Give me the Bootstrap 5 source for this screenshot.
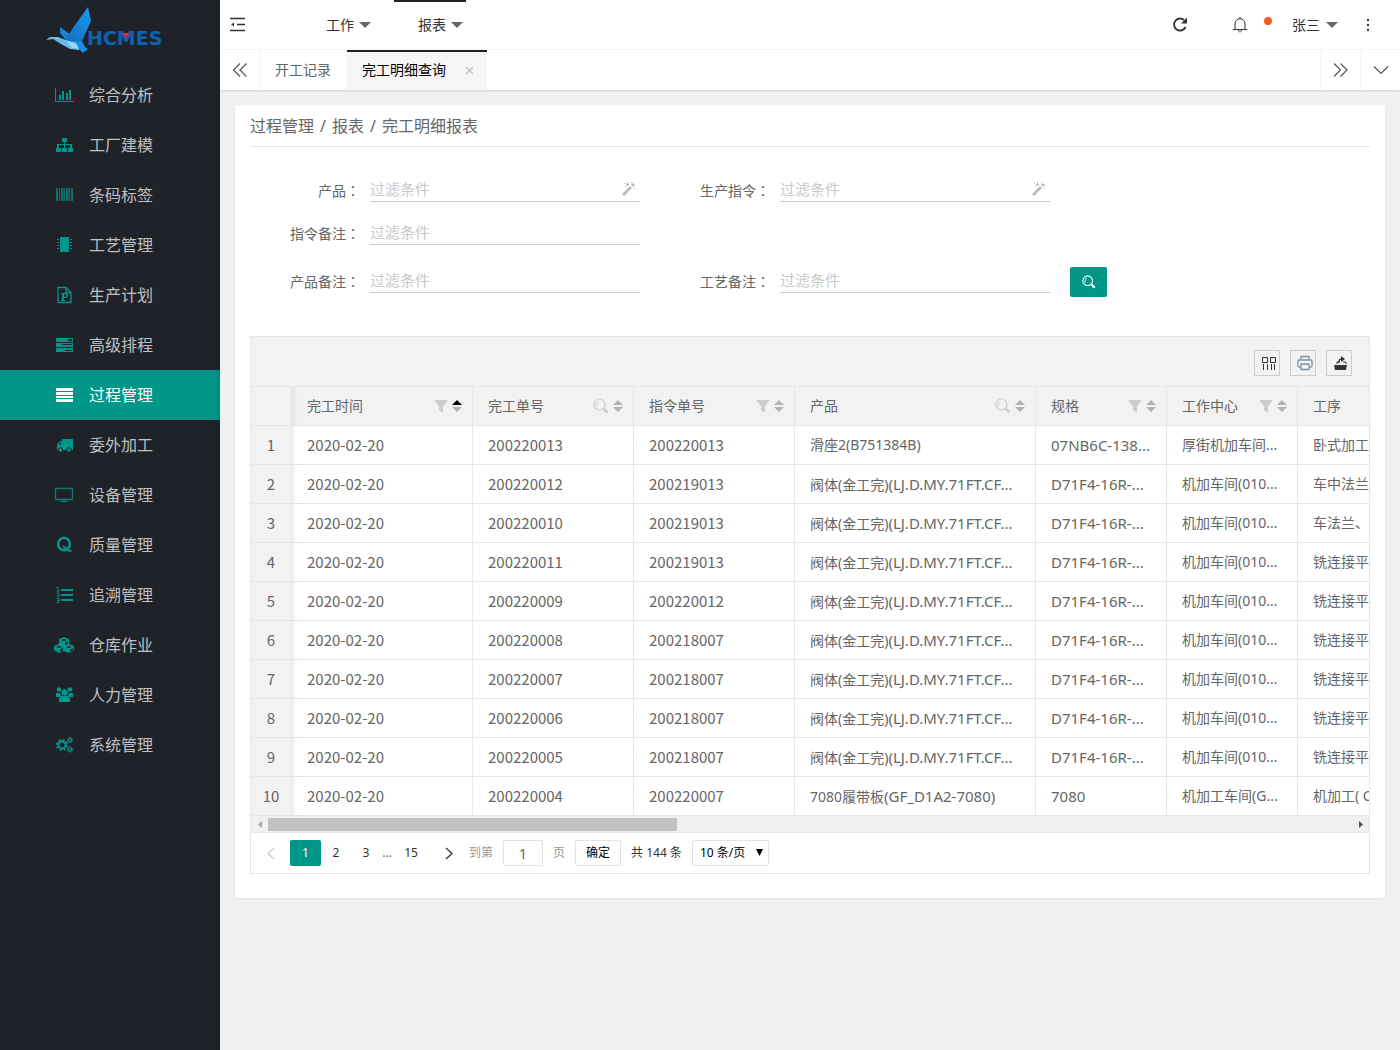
<!DOCTYPE html>
<html lang="zh-CN">
<head>
<meta charset="utf-8">
<meta name="viewport" content="width=device-width, initial-scale=1">
<title>HCMES 完工明细查询</title>
<link rel="stylesheet" href="https://cdn.jsdelivr.net/npm/bootstrap@5.3.0/dist/css/bootstrap.min.css">
<style>
:root{--teal:#009688;--ink:#20222a;--line:#e6e6e6;--pale:#f2f2f2}
body{font-family:"Noto Sans","Noto Sans CJK SC",sans-serif;font-size:14px;line-height:24px;color:#666;background:#f0f0f0}
a{color:inherit;text-decoration:none}
svg{display:block;flex:none}
.side{width:220px;background:var(--ink);color:#bfc0c2;flex:none;min-height:100vh}
.brand{height:61px;padding:0 0 0 45px;border-bottom:1px solid #1b1d24;margin-bottom:9px}
.menu-link{height:50px;padding-left:53px;gap:13px;font-size:16px}
.menu-link svg{width:23px;height:20px;color:var(--teal);fill:currentColor}
.menu-link.active{background:var(--teal);color:#fff}
.menu-link.active svg{color:#fff}
.main-col{min-width:0;box-shadow:-1px 0 4px rgba(0,0,0,.15)}
.topbar{height:50px;border-bottom:1px solid #f6f6f6;color:#333;padding:0 29px 0 10px}
.top-item{height:49px;padding:0 3px 1px 24px;gap:5px;border-top:2px solid transparent}
.top-item.active{border-top-color:var(--ink)}
.tri{border:6px solid transparent;border-top-color:#666;border-bottom:0;width:0;height:0}
.top-nav{margin-left:56px;gap:20px}
.bell-btn{margin-left:44px;gap:16px}
.user-link{gap:6px}
.icon-btn{border:0;background:none;padding:0;color:inherit;display:flex;align-items:center;justify-content:center}
.tabs-bar{height:40px;box-shadow:0 1px 2px rgba(0,0,0,.12);position:relative}
.tab-arrow{width:40px}
.edge-r{border-right:1px solid #f6f6f6}.edge-l{border-left:1px solid #f6f6f6}
.tab-item{padding:0 15px}
.tab-item.active{background:#f6f6f6;color:#000;border-top:2px solid var(--ink);padding:0 12px 2px 15px;gap:19px;width:140px}
.panel{background:#fff;margin:15px;padding:0 15px 24px;border-radius:2px;box-shadow:0 1px 2px rgba(0,0,0,.05)}
.crumbs{font-size:16px;height:42px;border-bottom:1px solid var(--line)}
.crumbs i{font-style:normal;margin:0 6px}
.filters{padding:25px 0 43px}
.f-row{height:30px}
.f-mid{margin:13px 0 18px}
.f-row label{width:110px;padding-top:6px;text-align:right;margin-right:10px;flex:none}
.f-row label.second{width:130px}
.f-row label i{font-style:normal;font-family:"Noto Sans CJK TC",sans-serif}
.f-box{width:270px;position:relative}
.f-box input{width:100%;height:30px;border:0;border-bottom:1px solid #c9c9c9;padding:4px 30px 0 0;font-size:15px;outline:0;color:#666}
.f-box input::placeholder{color:#c9c9c9;opacity:1}
.f-box svg{position:absolute;right:4px;top:10px}
.search-btn{width:37px;height:30px;background:var(--teal);border-radius:2px;color:#fff;margin:4px 0 0 20px}
.grid-box{border:1px solid var(--line)}
.grid-tools{height:50px;background:var(--pale);border-bottom:1px solid var(--line);gap:10px;padding:2px 17px 0 0}
.tool-btn{width:26px;height:26px;border:1px solid #ccc;color:#333}
.grid-view{overflow:hidden}
.dt{table-layout:fixed;width:1178px;border-collapse:separate;border-spacing:0;margin:0}
.dt th,.dt td{height:39px;padding:0 15px;border:0 solid var(--line);border-width:0 1px 1px 0;font-weight:400;white-space:nowrap;overflow:hidden;vertical-align:middle;line-height:24px}
.dt th{background:var(--pale);padding-right:10px}
.dt tr>:first-child{background:var(--pale);padding:0;text-align:center}
.dt tr>:nth-child(2){background-image:linear-gradient(90deg,rgba(0,0,0,.05),transparent 6px)}
.dt .num,.dt td:first-child{font-family:"Noto Sans CJK SC",sans-serif;font-size:15px}
.dt .lt,.dt td:nth-child(6){font-size:15px}
.th-in{display:flex;align-items:center;justify-content:space-between}
.th-ic{display:flex;align-items:center;gap:4px;color:#ccc;fill:currentColor}
.scroll-bar{height:17px;background:#f0f0f0;border-bottom:1px solid var(--line)}
.scroll-end{width:17px;display:flex;align-items:center;justify-content:center}
.scroll-track{flex:1}
.scroll-thumb{width:37.7%;height:13px;background:#c1c1c1}
.pager{height:40px;font-size:12px;color:#333;padding-left:5px}
.pager .pg{width:30px;height:26px;display:flex;align-items:center;justify-content:center}
.pager .pg.active{background:var(--teal);color:#fff;border-radius:2px;width:31px}
.pager .dots{width:12px;text-align:center;color:#666}
.pager .nxt{margin:0 5px 0 8px}
.pager .pg.last{margin-left:3px}
.pager .muted-t{color:#999}
.pager input,.pager button.ok,.pager select{height:26px;border:1px solid #e2e2e2;border-radius:2px;background:#fff;color:#000;padding:0}
.pager input{width:40px;text-align:center;font-size:14px;color:#666;margin:0 10px}
.pager button.ok{width:46px;margin:0 10px}
.pager select{width:77px;padding-left:7px;appearance:none}
.sel-box{position:relative;margin-left:10px}
.sel-box svg{position:absolute;right:6px;top:9px;pointer-events:none}
.logo-word{font:bold 19px "DejaVu Sans",sans-serif;fill:#0d62ae}
</style>
</head>
<body>
<svg width="0" height="0" class="position-absolute">
 <symbol id="funnel" viewBox="0 0 14 14"><path d="M0 1h14L9 7v7L5 11V7z"/></symbol>
 <symbol id="lens" viewBox="0 0 16 16"><g fill="none" stroke="currentColor"><circle cx="6.500" cy="6.500" r="5.500" stroke-width="1.200"/><path d="M5.500 3.500a3.400 3.400 0 0 0-1.500 5" /><path d="m10.800 10.800 3.700 3.700" stroke-width="2.600"/></g></symbol>
 <symbol id="sort" viewBox="0 0 10 12"><path d="M0 5 5 0l5 5zM0 7h10l-5 5z" fill="#b2b2b2"/></symbol>
 <symbol id="sortup" viewBox="0 0 10 12"><path d="M0 5 5 0l5 5z" fill="#000"/><path d="M0 7h10l-5 5z" fill="#b2b2b2"/></symbol>
 <symbol id="wand" viewBox="0 0 14 14"><path d="m0 12 8-8 2 2-8 8zM9 3l2-2 2 2-2 2zM2 1h1v1H2zM5 0h1v2h1v1H6v1H5V3H4V2h1zM9 0h1v1H9zM12 6h1v1h-1zM3 4h1v1H3z" fill="#bbb"/></symbol>
</svg>
<div class="d-flex">
<aside class="side">
 <div class="brand">
  <svg width="126" height="60" viewBox="45 0 126 60" role="img" aria-label="HCMES">
   <defs><linearGradient id="wing" x1="0" y1="1" x2="1" y2="0"><stop stop-color="#126cb8"/><stop offset="1" stop-color="#189bf1"/></linearGradient></defs>
   <path d="M60 27l11 8-5 5-6-7z" fill="#1785d8"/>
   <path d="M88 7l3 14-9 20-17-1 10-15z" fill="url(#wing)"/>
   <path d="M46 40l4-3 8 0 10 4 10 1 4 5-3 3-9-1-9-5-8-5z" fill="#63bdf0"/>
   <path d="M65 40l17 1 3 6 3 2-5 4-4-4-7-1z" fill="#1a8de0"/><path d="M65 40l11 3 3 6-7-1z" fill="#9bd7f7"/>
   <text x="87" y="45" class="logo-word">HCMES</text>
   <path d="M122 33h8l-4 5z" fill="#e02f2f"/>
  </svg>
 </div>
 <nav class="d-flex flex-column">
  <a href="#" class="menu-link d-flex align-items-center"><svg viewBox="0 0 23 20"><path d="M2 3h1v13h18v1H2zM6 10h2v5H6zM9 6h2v9H9zM13 8h2v7h-2zM16 5h2v10h-2z"/></svg><span>综合分析</span></a>
  <a href="#" class="menu-link d-flex align-items-center"><svg viewBox="0 0 23 20"><path d="M9 3h5v4h-2v2h7v4h1v4h-5v-4h2v-3h-5v3h2v4H9v-4h2v-3H6v3h2v4H3v-4h1V9h7V7H9z"/></svg><span>工厂建模</span></a>
  <a href="#" class="menu-link d-flex align-items-center"><svg viewBox="0 0 23 20" opacity=".7"><path d="M3 3h2v13H3zM6 3h1v13H6zM8 3h2v13H8zM10.500 3h1.500v13h-1.500zM13 3h2v13h-2zM15.500 3H17v13h-1.500zM18 3h2v13h-2z"/></svg><span>条码标签</span></a>
  <a href="#" class="menu-link d-flex align-items-center"><svg viewBox="0 0 23 20"><path d="M7 2h9v15H7zM4 4h2v1H4zm0 3h2v1H4zm0 3h2v1H4zm0 3h2v1H4zM17 4h2v1h-2zm0 3h2v1h-2zm0 3h2v1h-2zm0 3h2v1h-2z"/></svg><span>工艺管理</span></a>
  <a href="#" class="menu-link d-flex align-items-center"><svg viewBox="0 0 23 20"><path d="M5 2.500h8l5 5v10H5zM13 2.500v5h5" fill="none" stroke="currentColor" stroke-width="1.300"/><path d="M8 8h4c4 0 4 5 0 5h-1v2h1v1H8v-1h1V9H8zm3 1v3c3 0 3-3 0-3z"/></svg><span>生产计划</span></a>
  <a href="#" class="menu-link d-flex align-items-center"><svg viewBox="0 0 23 20"><path fill-rule="evenodd" d="M3 3h17v4H3zm12 1v2h4V4zM3 8h17v4H3zm6 1v1h10V9zM3 13h17v4H3zm9 2v1h7v-1z"/></svg><span>高级排程</span></a>
  <a href="#" class="menu-link active d-flex align-items-center"><svg viewBox="0 0 23 20"><path d="M3 3h17v3H3zM3 7h17v3H3zM3 11h17v2H3zM3 14h17v3H3z"/></svg><span>过程管理</span></a>
  <a href="#" class="menu-link d-flex align-items-center"><svg viewBox="0 0 23 20"><path fill-rule="evenodd" d="M9 4h11v11H4V9l3-3h2zM5.500 9.500H8V7.500H7z"/><g stroke="#20222a"><circle cx="7.500" cy="15" r="2.300"/><circle cx="16" cy="15" r="2.300"/></g></svg><span>委外加工</span></a>
  <a href="#" class="menu-link d-flex align-items-center"><svg viewBox="0 0 23 20" opacity=".8"><rect x="2.500" y="3.500" width="17" height="11" rx="1" fill="none" stroke="currentColor" stroke-width="1.300"/><path d="M10 14h2v2h3v1H7v-1h3z"/></svg><span>设备管理</span></a>
  <a href="#" class="menu-link d-flex align-items-center"><svg viewBox="0 0 23 20"><g fill="none" stroke="currentColor"><ellipse cx="11" cy="9" rx="5.800" ry="6.300" stroke-width="2.500"/><path d="M10 11.500c3 0 3 6 8.500 4" stroke-width="2"/></g></svg><span>质量管理</span></a>
  <a href="#" class="menu-link d-flex align-items-center"><svg viewBox="0 0 23 20"><path d="M8 4h12v2H8zM8 9h12v2H8zM8 14h12v2H8z"/><path d="M3.500 2.500H5v3M3.500 6h3M3.500 8H6v2L4 11.500h2.500M3.500 13.500H6v4H3.500M4 15.500h2" fill="none" stroke="currentColor"/></svg><span>追溯管理</span></a>
  <a href="#" class="menu-link d-flex align-items-center"><svg viewBox="0 0 23 20"><path fill-rule="evenodd" d="M11 2l5 2v5l5 2v4l-5 3-5-2-5 2-5-3v-4l5-2V4zM8 5l3 1 3-1-3-1zM3 12l3 1 3-1-3-1zM13 12l3 1 3-1-3-1zM12 8v2l3-1V6zM7 15v2l3-1v-3zM17 15v2l3-2v-2z"/></svg><span>仓库作业</span></a>
  <a href="#" class="menu-link d-flex align-items-center"><svg viewBox="0 0 23 20"><circle cx="6" cy="4.500" r="2.300"/><circle cx="17" cy="4.500" r="2.300"/><circle cx="11.500" cy="7.500" r="3.200"/><path d="M3 8h4l1 3-2 1H3zM20 8h-4l-1 3 2 1h3zM8 11h7c2 1 2.500 3 2 6H6c-.500-3 0-5 2-6z"/></svg><span>人力管理</span></a>
  <a href="#" class="menu-link d-flex align-items-center"><svg viewBox="0 0 23 20"><g fill="none" stroke="currentColor"><circle cx="9" cy="10" r="3.600" stroke-width="2.200"/><circle cx="9" cy="10" r="5.300" stroke-width="1.600" stroke-dasharray="2.080 2.080"/><circle cx="17" cy="5" r="1.700" stroke-width="1.300"/><circle cx="17" cy="5" r="2.700" stroke-dasharray="1.400 1.400"/><circle cx="17" cy="14.500" r="1.700" stroke-width="1.300"/><circle cx="17" cy="14.500" r="2.700" stroke-dasharray="1.400 1.400"/></g></svg><span>系统管理</span></a>
 </nav>
</aside>
<div class="main-col flex-grow-1">
 <header class="topbar bg-white d-flex align-items-center">
  <button class="icon-btn" aria-label="收起菜单"><svg width="16" height="16" viewBox="0 0 16 16"><path d="M0 1.500h15M7 7.500h8M0 13.500h15" stroke="#333" stroke-width="1.500"/><path d="M1 7.500l3-2v4z" fill="#333"/></svg></button>
  <nav class="top-nav d-flex align-self-start">
   <a href="#" class="top-item d-flex align-items-center"><span>工作</span><i class="tri"></i></a>
   <a href="#" class="top-item active d-flex align-items-center"><span>报表</span><i class="tri"></i></a>
  </nav>
  <div class="d-flex align-items-center ms-auto">
   <button class="icon-btn" aria-label="刷新"><svg width="16" height="16" viewBox="0 0 16 16"><path d="M13.500 10A6 6 0 1 1 12 3" fill="none" stroke="#333" stroke-width="1.900"/><path d="M15 .500v6H9z" fill="#333"/></svg></button>
   <button class="icon-btn bell-btn" aria-label="消息"><svg class="me-n1" width="16" height="16" viewBox="0 0 16 16"><path d="M1 12.500h14M3 12V7c0-7 10-7 10 0v5M6.500 13c0 2.500 3 2.500 3 0M8 0v2" fill="none" stroke="#333"/></svg><svg width="8" height="16" viewBox="0 0 8 16"><circle cx="4" cy="4" r="4" fill="#ff5722"/></svg></button>
   <a href="#" class="user-link d-flex align-items-center ms-3 ps-1"><span>张三</span><i class="tri"></i></a>
   <button class="icon-btn ms-4 ps-1" aria-label="更多"><svg width="5" height="14" viewBox="0 0 5 14"><path d="M1 1h2v2H1zM1 6h2v2H1zM1 11h2v2H1z" fill="#333"/></svg></button>
  </div>
 </header>
 <div class="tabs-bar bg-white d-flex">
  <button class="icon-btn tab-arrow edge-r" aria-label="向左"><svg width="16" height="16" viewBox="0 0 16 16"><path d="M8 1.500 1.500 8 8 14.500M14.500 1.500 8 8l6.500 6.500" fill="none" stroke="#555" stroke-width="1.200"/></svg></button>
  <a href="#" class="tab-item edge-r d-flex align-items-center">开工记录</a>
  <a href="#" class="tab-item active d-flex align-items-center"><span>完工明细查询</span><svg width="9" height="9" viewBox="0 0 9 9"><path d="m1 1 7 7M8 1 1 8" stroke="#bbb" stroke-width="1.200"/></svg></a>
  <button class="icon-btn tab-arrow edge-l ms-auto" aria-label="向右"><svg width="16" height="16" viewBox="0 0 16 16"><path d="M1 1.500 7.500 8 1 14.500M7.500 1.500 14 8l-6.500 6.500" fill="none" stroke="#555" stroke-width="1.200"/></svg></button>
  <button class="icon-btn tab-arrow edge-l" aria-label="标签操作"><svg width="16" height="10" viewBox="0 0 16 10"><path d="m1 1.500 7 7 7-7" fill="none" stroke="#555" stroke-width="1.200"/></svg></button>
 </div>
 <main class="panel">
  <div class="crumbs d-flex align-items-center"><span>过程管理</span><i>/</i><span>报表</span><i>/</i><span>完工明细报表</span></div>
  <form class="filters">
   <div class="f-row d-flex">
    <label for="f1">产品<i lang="zh-TW">：</i></label><div class="f-box"><input id="f1" type="text" placeholder="过滤条件"><svg width="14" height="14"><use href="#wand"/></svg></div>
    <label for="f2" class="second">生产指令<i lang="zh-TW">：</i></label><div class="f-box"><input id="f2" type="text" placeholder="过滤条件"><svg width="14" height="14"><use href="#wand"/></svg></div>
   </div>
   <div class="f-row f-mid d-flex">
    <label for="f3">指令备注<i lang="zh-TW">：</i></label><div class="f-box"><input id="f3" type="text" placeholder="过滤条件"></div>
   </div>
   <div class="f-row d-flex">
    <label for="f4">产品备注<i lang="zh-TW">：</i></label><div class="f-box"><input id="f4" type="text" placeholder="过滤条件"></div>
    <label for="f5" class="second">工艺备注<i lang="zh-TW">：</i></label><div class="f-box"><input id="f5" type="text" placeholder="过滤条件"></div>
    <button type="button" class="icon-btn search-btn" aria-label="查询"><svg width="14" height="14"><use href="#lens"/></svg></button>
   </div>
  </form>
  <section class="grid-box">
   <div class="grid-tools d-flex align-items-center justify-content-end">
    <button class="icon-btn tool-btn" aria-label="筛选列"><svg class="ms-1" width="14" height="14" viewBox="0 0 14 14"><path d="M.500 1.500h5v5h-5zM8.500 1.500h5v5h-5zM1.500 8v6M5.500 8v6M9.500 8v6M12.500 8v6" fill="none" stroke="#333"/></svg></button>
    <button class="icon-btn tool-btn" aria-label="打印"><svg class="ms-1" width="16" height="16" viewBox="0 0 16 16"><g fill="none" stroke="#7893a8" stroke-width="1.300"><path d="M4 5V1.500h8V5M3.500 12H2a1 1 0 0 1-1-1V6a1 1 0 0 1 1-1h12a1 1 0 0 1 1 1v5a1 1 0 0 1-1 1h-1.500"/><path d="M4 9h8v5.500H4z"/></g></svg></button>
    <button class="icon-btn tool-btn" aria-label="导出"><svg class="ms-1" width="14" height="14" viewBox="0 0 14 14"><path d="M0 9h13l-1 5H1z" fill="#333"/><path d="M3 8V6h2M9 6h3v2" stroke="#333" fill="none"/><path d="M5 7c0-4 1-4 3-4" stroke="#333" stroke-width="1.400" fill="none"/><path d="M7 0l4 3-4 3z" fill="#333"/></svg></button>
   </div>
   <div class="grid-view">
   <table class="dt">
    <colgroup><col style="width:41px"><col style="width:181px"><col style="width:161px"><col style="width:161px"><col style="width:241px"><col style="width:131px"><col style="width:131px"><col style="width:131px"></colgroup>
    <thead><tr>
     <th></th>
     <th><div class="th-in">完工时间<span class="th-ic"><svg width="14" height="14"><use href="#funnel"/></svg><svg width="10" height="12"><use href="#sortup"/></svg></span></div></th>
     <th><div class="th-in">完工单号<span class="th-ic"><svg width="16" height="16"><use href="#lens"/></svg><svg width="10" height="12"><use href="#sort"/></svg></span></div></th>
     <th><div class="th-in">指令单号<span class="th-ic"><svg width="14" height="14"><use href="#funnel"/></svg><svg width="10" height="12"><use href="#sort"/></svg></span></div></th>
     <th><div class="th-in">产品<span class="th-ic"><svg width="16" height="16"><use href="#lens"/></svg><svg width="10" height="12"><use href="#sort"/></svg></span></div></th>
     <th><div class="th-in">规格<span class="th-ic"><svg width="14" height="14"><use href="#funnel"/></svg><svg width="10" height="12"><use href="#sort"/></svg></span></div></th>
     <th><div class="th-in">工作中心<span class="th-ic"><svg width="14" height="14"><use href="#funnel"/></svg><svg width="10" height="12"><use href="#sort"/></svg></span></div></th>
     <th>工序</th>
    </tr></thead>
    <tbody>
     <tr><td>1</td><td class="num">2020-02-20</td><td class="num">200220013</td><td class="num">200220013</td><td>滑座2(B751384B)</td><td>07NB6C-138...</td><td>厚街机加车间...</td><td>卧式加工</td></tr>
     <tr><td>2</td><td class="num">2020-02-20</td><td class="num">200220012</td><td class="num">200219013</td><td>阀体(金工完)<span class="lt">(LJ.D.MY.71FT.CF...</span></td><td>D71F4-16R-...</td><td>机加车间(010...</td><td>车中法兰</td></tr>
     <tr><td>3</td><td class="num">2020-02-20</td><td class="num">200220010</td><td class="num">200219013</td><td>阀体(金工完)<span class="lt">(LJ.D.MY.71FT.CF...</span></td><td>D71F4-16R-...</td><td>机加车间(010...</td><td>车法兰、</td></tr>
     <tr><td>4</td><td class="num">2020-02-20</td><td class="num">200220011</td><td class="num">200219013</td><td>阀体(金工完)<span class="lt">(LJ.D.MY.71FT.CF...</span></td><td>D71F4-16R-...</td><td>机加车间(010...</td><td>铣连接平</td></tr>
     <tr><td>5</td><td class="num">2020-02-20</td><td class="num">200220009</td><td class="num">200220012</td><td>阀体(金工完)<span class="lt">(LJ.D.MY.71FT.CF...</span></td><td>D71F4-16R-...</td><td>机加车间(010...</td><td>铣连接平</td></tr>
     <tr><td>6</td><td class="num">2020-02-20</td><td class="num">200220008</td><td class="num">200218007</td><td>阀体(金工完)<span class="lt">(LJ.D.MY.71FT.CF...</span></td><td>D71F4-16R-...</td><td>机加车间(010...</td><td>铣连接平</td></tr>
     <tr><td>7</td><td class="num">2020-02-20</td><td class="num">200220007</td><td class="num">200218007</td><td>阀体(金工完)<span class="lt">(LJ.D.MY.71FT.CF...</span></td><td>D71F4-16R-...</td><td>机加车间(010...</td><td>铣连接平</td></tr>
     <tr><td>8</td><td class="num">2020-02-20</td><td class="num">200220006</td><td class="num">200218007</td><td>阀体(金工完)<span class="lt">(LJ.D.MY.71FT.CF...</span></td><td>D71F4-16R-...</td><td>机加车间(010...</td><td>铣连接平</td></tr>
     <tr><td>9</td><td class="num">2020-02-20</td><td class="num">200220005</td><td class="num">200218007</td><td>阀体(金工完)<span class="lt">(LJ.D.MY.71FT.CF...</span></td><td>D71F4-16R-...</td><td>机加车间(010...</td><td>铣连接平</td></tr>
     <tr><td>10</td><td class="num">2020-02-20</td><td class="num">200220004</td><td class="num">200220007</td><td>7080履带板<span class="lt">(GF_D1A2-7080)</span></td><td>7080</td><td>机加工车间(G...</td><td>机加工( C</td></tr>
    </tbody>
   </table>
   </div>
   <div class="scroll-bar d-flex align-items-center">
    <span class="scroll-end"><svg width="4" height="7" viewBox="0 0 4 7"><path d="M4 0v7L0 3.500z" fill="#a3a3a3"/></svg></span>
    <div class="scroll-track"><div class="scroll-thumb"></div></div>
    <span class="scroll-end"><svg width="4" height="7" viewBox="0 0 4 7"><path d="M0 0v7l4-3.500z" fill="#505050"/></svg></span>
   </div>
   <div class="pager d-flex align-items-center">
    <a href="#" class="pg" aria-label="上一页"><svg width="8" height="13" viewBox="0 0 8 13"><path d="M7 1 1 6.500 7 12" fill="none" stroke="#ccc" stroke-width="1.300"/></svg></a>
    <a href="#" class="pg active ms-1">1</a><a href="#" class="pg">2</a><a href="#" class="pg">3</a><span class="dots">...</span><a href="#" class="pg last">15</a>
    <a href="#" class="pg nxt" aria-label="下一页"><svg width="8" height="13" viewBox="0 0 8 13"><path d="m1 1 6 5.500L1 12" fill="none" stroke="#333" stroke-width="1.300"/></svg></a>
    <label for="pgno" class="muted-t">到第</label><input id="pgno" type="text" value="1"><span class="muted-t">页</span>
    <button class="ok">确定</button><span>共 144 条</span>
    <div class="sel-box"><select aria-label="每页条数"><option>10 条/页</option><option>20 条/页</option></select><svg width="7" height="7" viewBox="0 0 7 7"><path d="M0 0h7L3.500 7z"/></svg></div>
   </div>
  </section>
 </main>
</div>
</div>
<script src="https://cdn.jsdelivr.net/npm/bootstrap@5.3.0/dist/js/bootstrap.bundle.min.js"></script>
</body>
</html>
